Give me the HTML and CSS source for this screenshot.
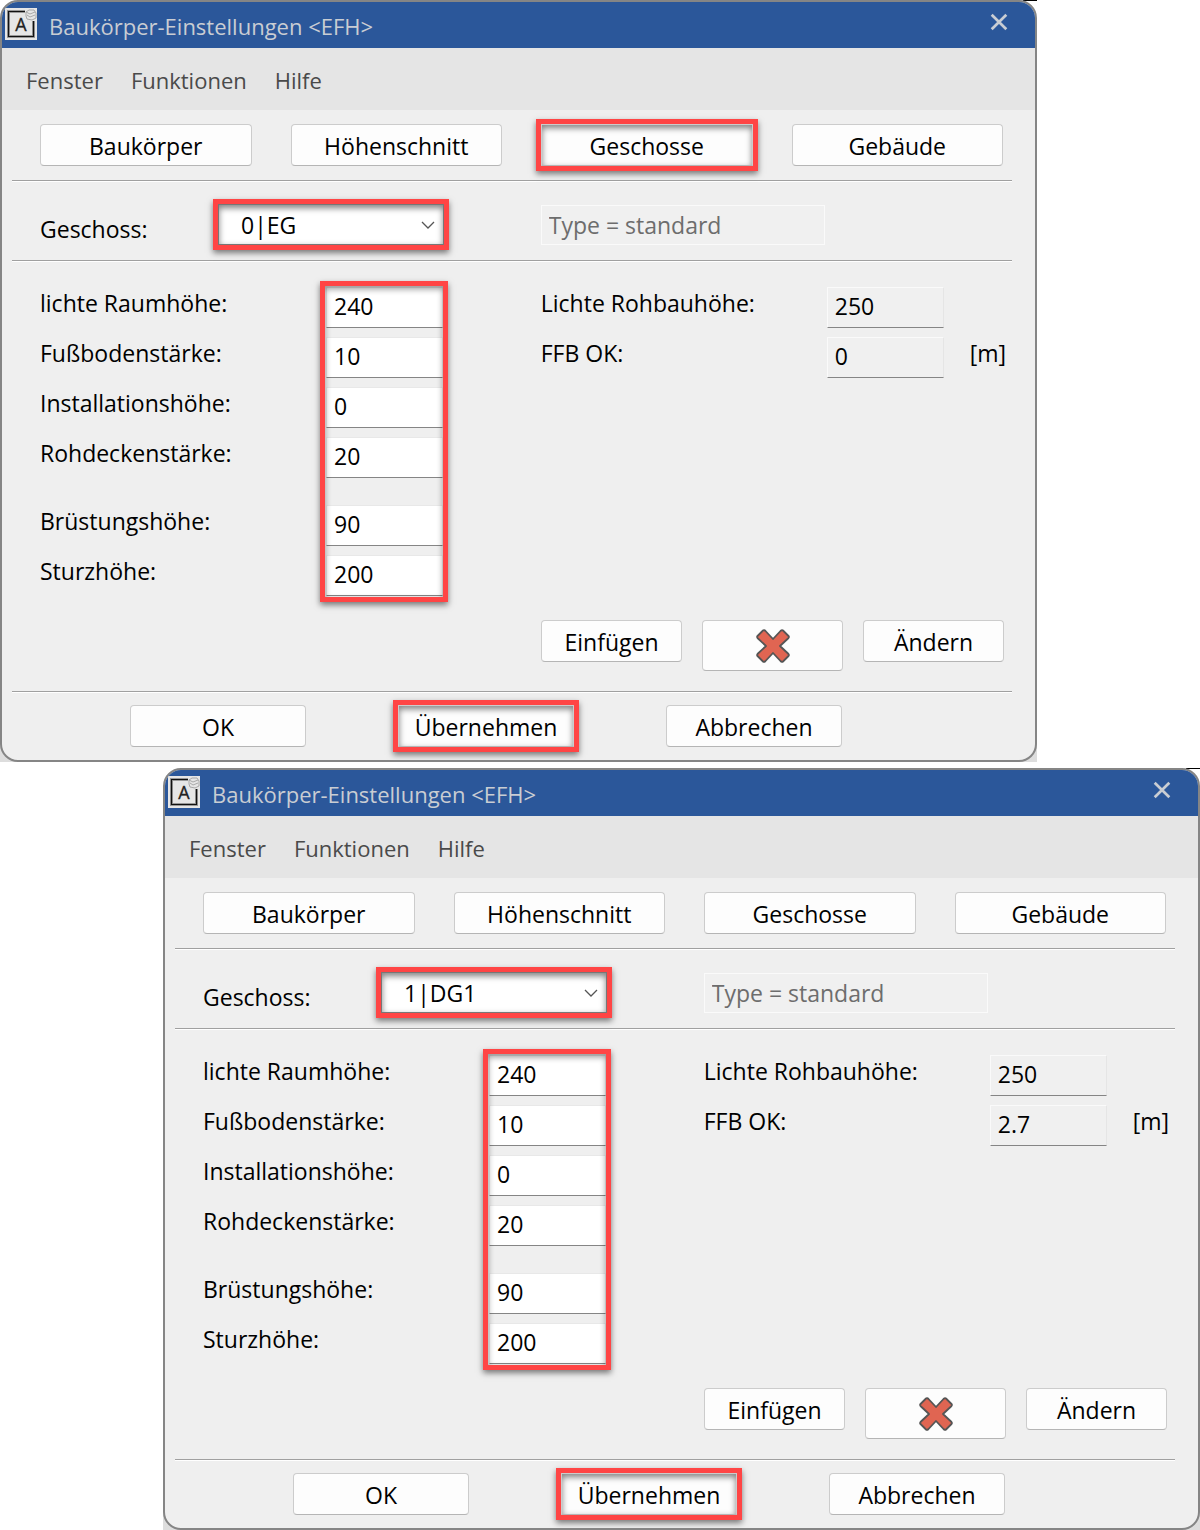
FILE: index.html
```html
<!DOCTYPE html>
<html lang="de">
<head>
<meta charset="UTF-8">
<meta name="viewport" content="width=device-width, initial-scale=1.0">
<title>Baukörper-Einstellungen</title>
<link rel="stylesheet" href="styles.css">
</head>
<body>

<svg class="sprite" aria-hidden="true">
    <symbol id="icon-app" viewBox="0 0 32 32">
        <rect width="32" height="32" fill="#e6e6e6"/>
        <path d="M20 3.500H3.500V28.500H28.500V13" fill="none" stroke="#999" stroke-width="3"/>
        <path d="M20 3.500H3.500V28.500H28.500V13" fill="none" stroke="#111" stroke-width="1.200"/>
        <text x="16" y="23" text-anchor="middle" font-family="Open Sans, sans-serif" font-size="18" fill="#222" stroke="#222" stroke-width=".3">A</text>
        <path d="M21 4l3-2h5l2 3v5l-4 2-5-1-1-3zM21 4l4 2 5-2M22 7l3 2 5-2" fill="none" stroke="#a8a8a8"/>
    </symbol>
    <symbol id="icon-close" viewBox="0 0 16 16">
        <path d="M1.500 1.500l13 13M14.500 1.500l-13 13" fill="none" stroke="#c9cdd3" stroke-width="2.400"/>
    </symbol>
    <symbol id="icon-delete" viewBox="0 0 34 34">
        <path d="M7 1.500Q8 .500 9.500 2L17 10 24.500 2Q26 .500 27 1.500L32.500 7Q33.500 8 32 9.500L24 17 32 24.500Q33.500 26 32.500 27L27 32.500Q26 33.500 24.500 32L17 24 9.500 32Q8 33.500 7 32.500L1.500 27Q.500 26 2 24.500L10 17 2 9.500Q.500 8 1.500 7Z" fill="#e06552" stroke="#555" stroke-width="1.800" stroke-linejoin="round"/>
    </symbol>
</svg>

<div class="frame">
    <form class="window">
        <header class="titlebar">
            <svg class="app-icon"><use href="#icon-app"/></svg>
            <h1>Baukörper-Einstellungen &lt;EFH&gt;</h1>
            <button type="button" class="close" aria-label="Schließen"><svg><use href="#icon-close"/></svg></button>
        </header>
        <nav class="menu">
            <a href="#">Fenster</a>
            <a href="#">Funktionen</a>
            <a href="#">Hilfe</a>
        </nav>
        <div class="content">
            <div class="tabs">
                <button type="button" class="btn">Baukörper</button>
                <button type="button" class="btn">Höhenschnitt</button>
                <button type="button" class="btn marked">Geschosse</button>
                <button type="button" class="btn">Gebäude</button>
            </div>
            <div class="columns storey">
                <div class="storey-select">
                    <label for="geschoss1">Geschoss:</label>
                    <select id="geschoss1" class="marked">
                        <option>0|EG</option>
                        <option>1|DG1</option>
                    </select>
                </div>
                <input type="text" class="type" value="Type = standard" aria-label="Type" disabled>
            </div>
            <div class="columns values">
                <div class="fields">
                    <div class="labels">
                        <label for="raum1">lichte Raumhöhe:</label>
                        <label for="boden1">Fußbodenstärke:</label>
                        <label for="inst1">Installationshöhe:</label>
                        <label for="decke1">Rohdeckenstärke:</label>
                        <label for="bruest1" class="group-start">Brüstungshöhe:</label>
                        <label for="sturz1">Sturzhöhe:</label>
                    </div>
                    <div class="inputs marked-group">
                        <input type="text" id="raum1" value="240">
                        <input type="text" id="boden1" value="10">
                        <input type="text" id="inst1" value="0">
                        <input type="text" id="decke1" value="20">
                        <input type="text" id="bruest1" class="group-start" value="90">
                        <input type="text" id="sturz1" value="200">
                    </div>
                </div>
                <div class="fields">
                    <div class="labels">
                        <label for="rohbau1">Lichte Rohbauhöhe:</label>
                        <label for="ffb1">FFB OK:</label>
                    </div>
                    <div class="inputs">
                        <input type="text" id="rohbau1" value="250" readonly>
                        <input type="text" id="ffb1" value="0" readonly>
                    </div>
                    <span class="unit">[m]</span>
                </div>
            </div>
            <div class="actions">
                <button type="button" class="btn">Einfügen</button>
                <button type="button" class="btn delete" aria-label="Löschen"><svg><use href="#icon-delete"/></svg></button>
                <button type="button" class="btn">Ändern</button>
            </div>
            <div class="footer">
                <button type="button" class="btn">OK</button>
                <button type="button" class="btn marked">Übernehmen</button>
                <button type="button" class="btn">Abbrechen</button>
            </div>
        </div>
    </form>
</div>

<div class="frame frame-right">
    <form class="window">
        <header class="titlebar">
            <svg class="app-icon"><use href="#icon-app"/></svg>
            <h1>Baukörper-Einstellungen &lt;EFH&gt;</h1>
            <button type="button" class="close" aria-label="Schließen"><svg><use href="#icon-close"/></svg></button>
        </header>
        <nav class="menu">
            <a href="#">Fenster</a>
            <a href="#">Funktionen</a>
            <a href="#">Hilfe</a>
        </nav>
        <div class="content">
            <div class="tabs">
                <button type="button" class="btn">Baukörper</button>
                <button type="button" class="btn">Höhenschnitt</button>
                <button type="button" class="btn">Geschosse</button>
                <button type="button" class="btn">Gebäude</button>
            </div>
            <div class="columns storey">
                <div class="storey-select">
                    <label for="geschoss2">Geschoss:</label>
                    <select id="geschoss2" class="marked">
                        <option>0|EG</option>
                        <option selected>1|DG1</option>
                    </select>
                </div>
                <input type="text" class="type" value="Type = standard" aria-label="Type" disabled>
            </div>
            <div class="columns values">
                <div class="fields">
                    <div class="labels">
                        <label for="raum2">lichte Raumhöhe:</label>
                        <label for="boden2">Fußbodenstärke:</label>
                        <label for="inst2">Installationshöhe:</label>
                        <label for="decke2">Rohdeckenstärke:</label>
                        <label for="bruest2" class="group-start">Brüstungshöhe:</label>
                        <label for="sturz2">Sturzhöhe:</label>
                    </div>
                    <div class="inputs marked-group">
                        <input type="text" id="raum2" value="240">
                        <input type="text" id="boden2" value="10">
                        <input type="text" id="inst2" value="0">
                        <input type="text" id="decke2" value="20">
                        <input type="text" id="bruest2" class="group-start" value="90">
                        <input type="text" id="sturz2" value="200">
                    </div>
                </div>
                <div class="fields">
                    <div class="labels">
                        <label for="rohbau2">Lichte Rohbauhöhe:</label>
                        <label for="ffb2">FFB OK:</label>
                    </div>
                    <div class="inputs">
                        <input type="text" id="rohbau2" value="250" readonly>
                        <input type="text" id="ffb2" value="2.7" readonly>
                    </div>
                    <span class="unit">[m]</span>
                </div>
            </div>
            <div class="actions">
                <button type="button" class="btn">Einfügen</button>
                <button type="button" class="btn delete" aria-label="Löschen"><svg><use href="#icon-delete"/></svg></button>
                <button type="button" class="btn">Ändern</button>
            </div>
            <div class="footer">
                <button type="button" class="btn">OK</button>
                <button type="button" class="btn marked">Übernehmen</button>
                <button type="button" class="btn">Abbrechen</button>
            </div>
        </div>
    </form>
</div>

</body>
</html>
```
FILE: styles.css
```css
* {
    box-sizing: border-box;
}

body {
    margin: 0;
    background-color: #fff;
    color: #000;
    font-family: "Segoe UI", "Open Sans", sans-serif;
    font-size: 23px;
    line-height: 32px;
}

button, input, select {
    font: inherit;
    color: inherit;
    margin: 0;
}

.sprite {
    display: none;
}

/* windows */
.frame {
    margin: 0 163px 6px 0;
    background: linear-gradient(to left, #000 14px, transparent 14px) top / 100% 1px no-repeat,
                linear-gradient(#fff 50%, #ddd 50%);
}

.frame-right {
    margin: 0 0 0 163px;
}

.window {
    border: 2px solid #858585;
    border-radius: 18px;
    background-color: #efefef;
    overflow: hidden;
}

.titlebar {
    display: flex;
    align-items: center;
    height: 46px;
    padding: 0 27px 2px 3px;
    background-color: #2b579a;
}

.titlebar h1 {
    flex: 1;
    margin: 0 0 0 12px;
    padding-top: 4px;
    font-size: 22px;
    font-weight: normal;
    color: #c9cdd3;
}

.app-icon {
    width: 32px;
    height: 32px;
}

.close {
    display: flex;
    padding: 0 0 4px;
    border: none;
    background: none;
}

.close svg {
    width: 18px;
    height: 18px;
}

.menu {
    display: flex;
    align-items: center;
    gap: 28px;
    height: 62px;
    padding: 2px 24px 0;
    background-color: #e5e5e5;
    font-size: 22px;
}

.menu a {
    color: #4a4a4a;
    text-decoration: none;
}

.content {
    padding: 0 23px 0 10px;
}

/* buttons */
.btn {
    height: 42px;
    padding: 2px 0 0;
    border: 1px solid #ccc;
    border-bottom-color: #b5b5b5;
    border-radius: 4px;
    background-color: #fdfdfd;
}

.tabs {
    display: grid;
    grid-template-columns: repeat(4, 1fr);
    gap: 39px;
    padding: 14px 9px 14px 28px;
}

.actions {
    display: flex;
    justify-content: flex-end;
    align-items: flex-start;
    gap: 20px;
    padding: 24px 8px 20px;
}

.actions .btn {
    width: 141px;
}

.actions .delete {
    height: 51px;
    padding: 0;
}

.delete svg {
    display: block;
    width: 34px;
    height: 34px;
    margin: 0 auto;
}

.footer {
    display: flex;
    justify-content: center;
    gap: 92px;
    padding: 13px 52px 13px 0;
}

.footer .btn {
    width: 176px;
}

.storey, .values, .footer {
    border-top: 1px solid #a0a0a0;
    box-shadow: inset 0 1px #fff;
}

/* form */
.columns {
    display: grid;
    grid-template-columns: minmax(0, 13fr) minmax(0, 12fr);
    padding-left: 28px;
    padding-right: 9px;
}

.storey {
    align-items: end;
    padding-top: 23px;
    padding-bottom: 15px;
}

.storey-select {
    display: flex;
    align-items: flex-end;
}

.storey-select label {
    width: 178px;
}

select {
    appearance: none;
    width: 226px;
    height: 41px;
    padding: 0 22px;
    border: 1px solid #777;
    background: #fff url("data:image/svg+xml,%3Csvg xmlns='http://www.w3.org/2000/svg' width='14' height='8'%3E%3Cpath d='M1 1l6 6 6-6' fill='none' stroke='%23555' stroke-width='1.3'/%3E%3C/svg%3E") right 8px center no-repeat;
}

.type {
    width: 284px;
    height: 40px;
    padding: 0 7px;
    border: 1px solid #fafafa;
    background-color: #f0f0f0;
    color: #6d6d6d;
}

.values {
    padding-top: 26px;
}

.fields {
    display: flex;
    align-items: flex-start;
}

.labels, .inputs {
    display: flex;
    flex-direction: column;
    flex-shrink: 0;
}

.labels {
    width: 286px;
    gap: 18px;
}

.inputs {
    width: 117px;
    gap: 9px;
}

.group-start {
    margin-top: 18px;
}

.inputs input {
    width: 100%;
    height: 41px;
    padding: 0 7px 3px;
    border: 1px solid #e8e8e8;
    border-bottom-color: #858585;
    background-color: #fff;
}

.inputs input:read-only {
    border-color: #fafafa #e5e5e5 #858585 #fafafa;
    background-color: #f0f0f0;
}

.unit {
    margin: 50px 0 0 26px;
}

/* red markers */
.marked {
    border-radius: 0;
    outline: 5px solid #ff4545;
    box-shadow: 0 3px 6px 5px rgba(0, 0, 0, 0.5), inset 0 3px 6px rgba(0, 0, 0, 0.5);
}

.marked-group {
    position: relative;
}

.marked-group::after {
    content: "";
    position: absolute;
    inset: -6px -5px -6px -6px;
    border: 5px solid #ff4545;
    box-shadow: 0 3px 6px rgba(0, 0, 0, 0.5), inset 0 3px 6px rgba(0, 0, 0, 0.4);
    pointer-events: none;
}
```
